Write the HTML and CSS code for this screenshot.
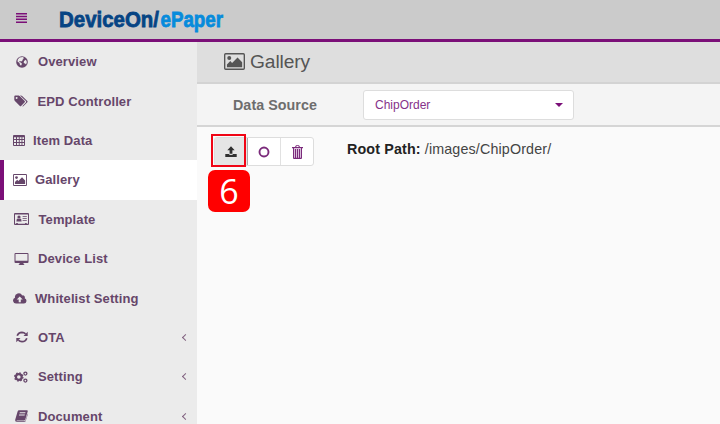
FILE: index.html
```html
<!DOCTYPE html>
<html lang="en">
<head>
<meta charset="utf-8">
<title>DeviceOn/ePaper</title>
<link rel="stylesheet" href="styles.css">
</head>
<body>
<svg class="defs" width="0" height="0">
  <symbol id="image" viewBox="0 0 20 16" preserveAspectRatio="none"><path fill-rule="evenodd" d="M1.6 0h16.8Q20 0 20 1.6v12.8q0 1.6-1.6 1.6H1.6Q0 16 0 14.4V1.6Q0 0 1.6 0zm.1 1.3q-.4 0-.4.4v12.6q0 .4.4.4h16.6q.4 0 .4-.4V1.7q0-.4-.4-.4z"/><circle cx="5" cy="4.8" r="1.9"/><path d="M2.8 13.3v-2.5L6 7.6l1.7 1.7 5.2-5.1 4.4 4.4v4.7z"/></symbol>
</svg>
<header class="topbar">
  <button class="burger" aria-label="Menu"><svg width="11" height="10" viewBox="0 0 11 10"><path d="M0 0h11v1.5H0zM0 2.8h11v1.5H0zM0 5.6h11v1.5H0zM0 8.4h11v1.5H0z"/></svg></button>
  <svg class="logo" width="180" height="32"><text class="brand" x="0" y="20.5" textLength="100" lengthAdjust="spacingAndGlyphs">DeviceOn/</text><text class="brand product" x="101.5" y="20.5" textLength="62.5" lengthAdjust="spacingAndGlyphs">ePaper</text></svg>
</header>
<div class="page">
  <nav class="sidebar">
    <a class="item overview"><svg viewBox="0 0 12 12"><circle cx="6" cy="6" r="5.8"/><path class="land" d="M3.6 1.4L7 1l1 1.3-1.3.8.2 1L5.3 5.4 3.7 5l-.5 1 1.5.5L6 7.7 5 9.7 3.8 8.6 3.5 7 1.5 5.4l.3-1.8zM8 5l1.9-1.3 1 2.3-.8 2.6L9 7.5 7.7 7z"/></svg><span>Overview</span></a>
    <a class="item tags"><svg viewBox="0 0 14 12"><path fill-rule="evenodd" d="M.3 1.6Q.3.6 1.3.6h3.3q.6 0 1.1.5l5 5q.6.6 0 1.2l-3.6 3.6q-.6.6-1.2 0l-5-5Q.3 5.3.3 4.7zM2.6 1.9a1 1 0 1 0 .1 2 1 1 0 0 0-.1-2z"/><path d="M6 .6h1q.6 0 1.1.5l5.2 5q.6.6 0 1.2l-3.7 3.8q-.6.5-1.2.1l3.5-3.8q.6-.7 0-1.3z"/></svg><span>EPD Controller</span></a>
    <a class="item table"><svg viewBox="0 0 12 11"><path fill-rule="evenodd" d="M1 0h10q1 0 1 1v9q0 1-1 1H1q-1 0-1-1V1q0-1 1-1zm0 2.2v1.9h2V2.2zm3 0v1.9h1.8V2.2zm2.7 0v1.9h1.8V2.2zm2.7 0v1.9H11V2.2zM1 5v2h2V5zm3 0v2h1.8V5zm2.7 0v2h1.8V5zm2.7 0v2H11V5zM1 8v2h2V8zm3 0v2h1.8V8zm2.7 0v2h1.8V8zm2.7 0v2H11V8z"/></svg><span>Item Data</span></a>
    <a class="item gallery active"><svg><use href="#image"/></svg><span>Gallery</span></a>
    <a class="item template"><svg viewBox="0 0 15 12"><path fill-rule="evenodd" d="M1 0h13q1 0 1 1v10q0 1-1 1H1q-1 0-1-1V1q0-1 1-1zm0 1.6v9.2h1.2V10h1.6v.8h7.3V10h1.6v.8H14V1.6z"/><circle cx="5" cy="4" r="1.6"/><path d="M2.4 8.5q0-2.8 1.4-2.9l1.2.5 1.2-.5q1.4.1 1.4 2.9zM8.6 3h4.2v.8H8.6zm0 2h4.2v.8H8.6zm0 2h4.2v.8H8.6z"/></svg><span>Template</span></a>
    <a class="item device"><svg viewBox="0 0 14 12"><path fill-rule="evenodd" d="M1 0h12q1 0 1 1v8q0 1-1 1H9v1l.8.4v.6H4.2v-.6L5 11v-1H1q-1 0-1-1V1q0-1 1-1zm0 1v6.8h12V1z"/></svg><span>Device List</span></a>
    <a class="item cloud"><svg viewBox="0 0 14 11"><path d="M3.2 10.6A3 3 0 0 1 2 4.8a3.8 3.8 0 0 1 7.2-2.3 2 2 0 0 1 2.5 2.7 2.8 2.8 0 0 1-.8 5.4z"/><path class="cut" d="M6.7 3.6l3 3H7.8v2.6H5.7V6.6h-2z"/></svg><span>Whitelist Setting</span></a>
    <a class="item ota"><svg viewBox="0 0 12 12"><path class="line" d="M1.2 4.8Q2.4 1.4 6 1.3q2 0 3.6 1.5M10.8 7.2Q9.6 10.6 6 10.7q-2 0-3.6-1.5"/><path d="M11.7.7v4.2H7.5zM.3 11.3V7.1h4.2z"/></svg><span>OTA</span><b class="chev"></b></a>
    <a class="item setting"><svg viewBox="0 0 14 12"><circle class="gear" cx="4.8" cy="6" r="2.9"/><circle class="teeth" cx="4.8" cy="6" r="4.1"/><circle class="small" cx="11.4" cy="2.6" r="1.5"/><circle class="small" cx="11.4" cy="9.6" r="1.5"/></svg><span>Setting</span><b class="chev"></b></a>
    <a class="item document"><svg viewBox="0 0 13 12"><path fill-rule="evenodd" d="M4 .2h8q1 .2.7 1.3l-2.4 8q-.3 1-1.3 1H2q-.7 0-.7.4 0 .4.7.4h7.6q.6 0 .8-.6l2.3-7.2q.3.3.1 1l-2.2 6.7q-.4.8-1.2.8H2Q-.1 11.9.2 9.8L2.6 1.6Q3 .2 4 .2zm.8 2l-.3 1h5.7l.3-1zm-.6 2.2l-.3 1h5.7l.3-1z"/></svg><span>Document</span><b class="chev"></b></a>
  </nav>
  <main>
    <h1><svg width="21" height="17"><use href="#image"/></svg><span>Gallery</span></h1>
    <section class="source"><label>Data Source</label><div class="select"><span>ChipOrder</span><i class="caret"></i></div></section>
    <section class="content">
      <div class="buttons">
        <button class="pressed" aria-label="Upload"><svg width="12" height="12" viewBox="0 0 12 12"><path d="M6 .3l3.7 3.9H7.4v3.6H4.6V4.2H2.3zM.3 8h3.5q.4 1 2.2 1t2.2-1h3.5v3H.3z"/></svg></button>
        <button aria-label="Circle"><svg width="12" height="12" viewBox="0 0 12 12"><circle class="ring" cx="6" cy="6" r="4.5"/></svg></button>
        <button aria-label="Delete"><svg class="trash" width="11" height="14" viewBox="0 0 11 14"><path d="M3 2L4 .2h3L8 2h3v1.2H0V2h3zm1.3 0h2.4L6.4 1H4.6z" fill-rule="evenodd"/><path class="bin" d="M1 3h9v9.7q0 1.2-1.2 1.2H2.2Q1 13.9 1 12.7z"/><path d="M1 3h1v9.8h7V3h1v9.7q0 1.2-1.2 1.2H2.2Q1 13.9 1 12.7zM3 4h1v9H3zm2 0h1v9H5zm2 0h1v9H7z"/></svg></button>
        <div class="highlight"></div><div class="step">6</div>
      </div>
      <p><strong>Root Path:</strong> /images/ChipOrder/</p>
    </section>
  </main>
</div>
</body>
</html>
```

FILE: styles.css
```css
* { box-sizing: border-box; }
body { margin: 0; height: 424px; overflow: hidden; background: #fafafa; font-family: "Liberation Sans", Arial, sans-serif; }
.defs { position: absolute; }
button { border: 0; padding: 0; background: none; }
.topbar { height: 42px; display: flex; background: #cbcbcb; border-bottom: 3px solid #7b0f78; }
.burger { width: 11px; height: 10px; margin: 13px 0 0 16px; display: flex; fill: #7b0f78; }
.logo { margin: 6px 0 0 32px; overflow: visible; }
.brand { font-size: 22.5px; font-weight: bold; fill: #064484; stroke: #064484; stroke-width: .8px; }
.product { fill: #078bdc; stroke: #078bdc; }
.page { display: flex; height: 382px; }
.sidebar { width: 197px; flex: none; background: #ebebeb; overflow: hidden; }
.item { height: 39.4px; display: flex; align-items: center; color: #66466a; font-size: 13px; font-weight: bold; letter-spacing: .1px; padding-right: 9px; }
.item svg { flex: none; fill: currentColor; height: 12px; }
.item.active { background: #fff; border-left: 4px solid #7b0f78; }
.item .land, .item .cut { fill: #ebebeb; }
.item .line, .item .gear, .item .teeth, .item .small { fill: none; stroke: currentColor; stroke-width: 1.7; }
.item .gear { stroke-width: 2.2; }
.item .teeth { stroke-width: 1.3; stroke-dasharray: 1.6 1.62; }
.item .small { stroke-width: 1.3; }
.overview { padding-left: 16px; gap: 11px; }
.item.overview svg { width: 12px; margin-right: -1px; }
.tags { padding-left: 14px; gap: 9.5px; }
.tags svg { width: 14px; }
.table { padding-left: 13px; gap: 8px; }
.table svg { width: 12px; height: 11px; }
.gallery { padding-left: 9px; gap: 8px; }
.item.gallery svg { width: 14px; height: 12px; }
.template { padding-left: 14px; gap: 9.5px; }
.template svg { width: 15px; }
.device { padding-left: 14px; gap: 9px; }
.device svg { width: 15px; }
.cloud { padding-left: 13px; gap: 8px; }
.cloud svg { width: 14px; height: 11px; }
.ota { padding-left: 16px; gap: 11px; }
.item.ota svg { width: 12px; margin-right: -1px; }
.setting { padding-left: 14px; gap: 10px; }
.setting svg { width: 14px; }
.document { padding-left: 15px; gap: 10px; }
.document svg { width: 13px; }
.chev { width: 5px; height: 5px; margin-left: auto; border: solid #80607f; border-width: 0 0 1.4px 1.4px; transform: rotate(45deg); }
main { flex: 1; }
h1 { margin: 0; height: 42px; display: flex; align-items: center; gap: 5px; padding: 0 0 1px 27px; background: #dedede; border-bottom: 2px solid #d3d3d3; color: #555; fill: #555; font-size: 19.2px; font-weight: normal; letter-spacing: -.1px; }
.source { height: 43px; display: flex; align-items: center; padding-left: 36px; background: #f4f4f4; border-bottom: 2px solid #d5d5d5; }
.source label { width: 130px; font-size: 14.3px; font-weight: bold; letter-spacing: .05px; color: #6d6d6d; }
.select { width: 211px; height: 30px; display: flex; align-items: center; justify-content: space-between; padding: 0 10px 0 11px; background: #fff; border: 1px solid #ddd; border-radius: 3px; font-size: 12px; color: #86318a; }
.caret { border: solid transparent; border-width: 4px 4px 0; border-top-color: #7b0f78; }
.content { display: flex; align-items: flex-start; padding: 10px 0 0 17px; }
.buttons { position: relative; width: 100px; height: 29px; display: flex; background: #fff; border: 1px solid #ddd; border-radius: 3px; }
.buttons button { width: 33px; display: flex; align-items: center; justify-content: center; border-left: 1px solid #e1e1e1; fill: #7b2b7b; }
.buttons .pressed { background: #e5e5e5; border-left: 0; border-right: 1px solid #aaa; fill: #303030; }
.buttons .pressed + button { border-left: 0; padding-right: 1px; }
.buttons .ring { fill: none; stroke: #7b2b7b; stroke-width: 1.9; }
.bin { fill: #d9bfdb; }
.highlight { position: absolute; left: -4px; top: -4px; width: 35px; height: 33px; border: 2px solid #f00515; }
.step { position: absolute; left: -7px; top: 32px; width: 42px; height: 42px; border-radius: 7px; background: #f00; color: #fff; font: 34px/43px "Open Sans", sans-serif; text-align: center; }
.content p { margin: 3px 0 0 33px; font-size: 14.3px; letter-spacing: .14px; line-height: 18px; color: #444; }
strong { color: #222; }
```
